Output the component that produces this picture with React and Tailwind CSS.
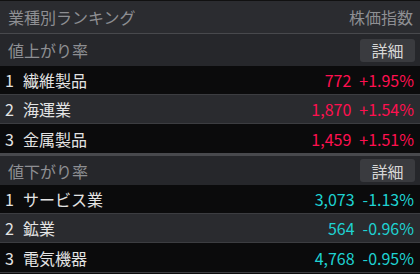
import React from 'react';

const font = { fontFamily: '"Noto Sans CJK JP", "Noto Sans", sans-serif' };

const gainers = [
    { rank: 1, name: '繊維製品', price: '772', change: '+1.95%' },
    { rank: 2, name: '海運業', price: '1,870', change: '+1.54%' },
    { rank: 3, name: '金属製品', price: '1,459', change: '+1.51%' },
];

const losers = [
    { rank: 1, name: 'サービス業', price: '3,073', change: '-1.13%' },
    { rank: 2, name: '鉱業', price: '564', change: '-0.96%' },
    { rank: 3, name: '電気機器', price: '4,768', change: '-0.95%' },
];

const SectionHeader = ({ title, tall }) => (
    <div className={`flex items-center justify-between bg-[#26272b] pl-2 pr-[5px] ${tall ? 'h-[32px]' : 'h-[29px]'}`}>
        <span className="text-[16px] text-[#8e8f93]">{title}</span>
        <button className="h-[23px] w-[55px] rounded-[3px] bg-[#3a3b3f] text-[16px] leading-none text-[#d6d6d6]">
            詳細
        </button>
    </div>
);

const Row = ({ item, odd, up, last }) => (
    <div
        className={`flex items-center justify-between pl-[5px] pr-[6px] ${odd ? 'bg-[#0b0b0c]' : 'bg-[#2a2b2f]'} ${last ? 'h-[29px]' : 'h-[29px] border-b border-[#3c3d41]'}`}
    >
        <div className="flex items-center text-[16px] text-[#e4e4e4]">
            <span className="w-[18px]">{item.rank}</span>
            <span>{item.name}</span>
        </div>
        <div className={`flex items-center gap-[8px] text-[16px] ${up ? 'text-[#ff1050]' : 'text-[#1ed2d2]'}`}>
            <span>{item.price}</span>
            <span>{item.change}</span>
        </div>
    </div>
);

export default function App() {
    return (
        <div className="w-[420px] h-[274px] overflow-hidden bg-[#0b0b0c] border-t border-[#111]" style={font}>
            <div className="flex h-[33px] items-center justify-between bg-[#2b2c30] pl-[8px] pr-[7px] border-b border-[#48494d]">
                <span className="text-[16px] text-[#8e8f93]">業種別ランキング</span>
                <span className="text-[16px] text-[#8e8f93]">株価指数</span>
            </div>
            <SectionHeader title="値上がり率" tall />
            {gainers.map((g, i) => (
                <Row key={g.rank} item={g} odd={i % 2 === 0} up last={i === gainers.length - 1} />
            ))}
            <div className="h-[3px] bg-[#48494d]"></div>
            <SectionHeader title="値下がり率" />
            {losers.map((l, i) => (
                <Row key={l.rank} item={l} odd={i % 2 === 0} last={i === losers.length - 1} />
            ))}
            <div className="h-[2px] border-t border-[#3c3d41]"></div>
        </div>
    );
}
